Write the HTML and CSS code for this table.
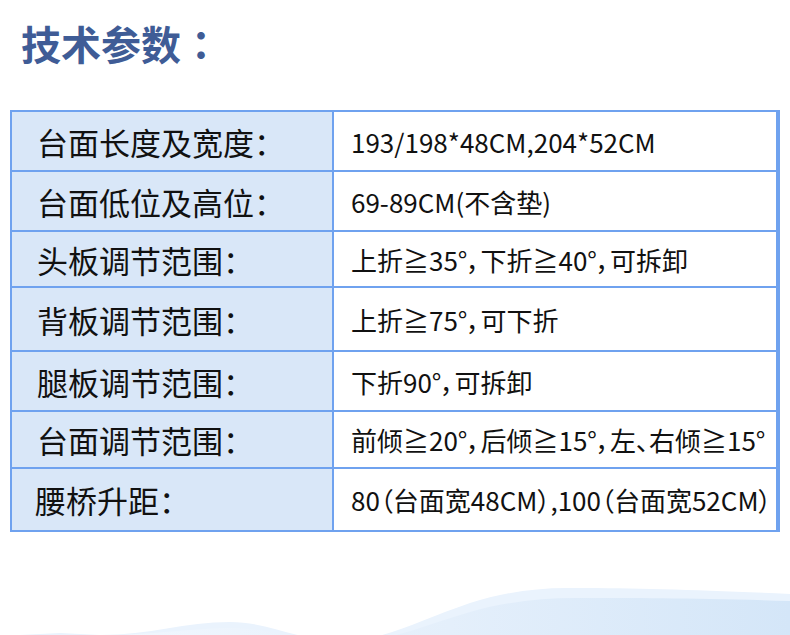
FILE: index.html
```html
<!DOCTYPE html>
<html lang="zh-CN">
<head>
<meta charset="utf-8">
<title>技术参数</title>
<link rel="stylesheet" href="styles.css">
</head>
<body>
<div class="page">
  <h1 class="title" lang="zh-TW">技术参数：</h1>
  <div class="spec">
    <div class="label">台面长度及宽度：</div><div class="value">193/198*48CM,204*52CM</div>
    <div class="label">台面低位及高位：</div><div class="value">69-89CM(不含垫)</div>
    <div class="label">头板调节范围：</div><div class="value">上折≧35°，下折≧40°，可拆卸</div>
    <div class="label">背板调节范围：</div><div class="value">上折≧75°，可下折</div>
    <div class="label">腿板调节范围：</div><div class="value">下折90°，可拆卸</div>
    <div class="label">台面调节范围：</div><div class="value">前倾≧20°，后倾≧15°，左、右倾≧15°</div>
    <div class="label label-last">腰桥升距：</div><div class="value">80（台面宽48CM）,100（台面宽52CM）</div>
  </div>
  <svg class="waves" viewBox="0 560 790 75" width="790" height="75" aria-hidden="true">
    <defs>
      <linearGradient id="wg" x1="0" y1="0" x2="1" y2="0">
        <stop offset="0" stop-color="#f1f7fe"/>
        <stop offset="0.5" stop-color="#e4effb"/>
        <stop offset="1" stop-color="#d4e6f8"/>
      </linearGradient>
    </defs>
    <path d="M20,635 L60,633 L100,635 C150,635 185,622 230,622 C270,622 300,642 345,641 C385,640 420,620 470,603 C505,592 540,587 575,588 C640,588 700,590 790,594 L790,635 Z" fill="#eaf3fd"/>
    <path d="M110,635 C160,634 195,628 232,628 C272,628 300,642 345,642 C390,642 425,625 470,612 C505,602 540,598 575,598 C640,598 700,598 790,601 L790,635 Z" fill="url(#wg)"/>
  </svg>
</div>
</body>
</html>
```
FILE: styles.css
```css
html, body {
  margin: 0;
  padding: 0;
  background: #ffffff;
  overflow: hidden;
}

.page {
  width: 790px;
  height: 635px;
  display: flex;
  flex-direction: column;
}

.title {
  margin: 0;
  padding: 23px 0 0 21px;
  height: 64px;
  box-sizing: border-box;
  font-family: "Noto Sans CJK TC", "Noto Sans CJK SC", sans-serif;
  font-size: 40px;
  line-height: 40px;
  font-weight: 700;
  color: #3f5c96;
}

.spec {
  margin: 46px 0 0 10px;
  width: 764px;
  display: grid;
  grid-template-columns: 320px 442px;
  grid-template-rows: 58px 58px 54px 62px 58px 55px 61px;
  gap: 2px;
  background: #6fa2ef;
  border: 2px solid #6fa2ef;
  border-right-width: 4px;
  box-sizing: content-box;
}

.label {
  background: #d9e7f8;
  display: flex;
  align-items: center;
  padding-left: 25px;
  font-family: "Noto Sans CJK SC", sans-serif;
  font-size: 31px;
  color: #111111;
  white-space: nowrap;
}

.label-last {
  padding-left: 23px;
}

.value {
  background: #ffffff;
  display: flex;
  align-items: center;
  padding-left: 17px;
  font-family: "Noto Sans CJK SC", sans-serif;
  font-size: 26px;
  font-feature-settings: "palt" 1;
  color: #111111;
  white-space: nowrap;
}

.waves {
  display: block;
  margin-top: 28px;
}
```
